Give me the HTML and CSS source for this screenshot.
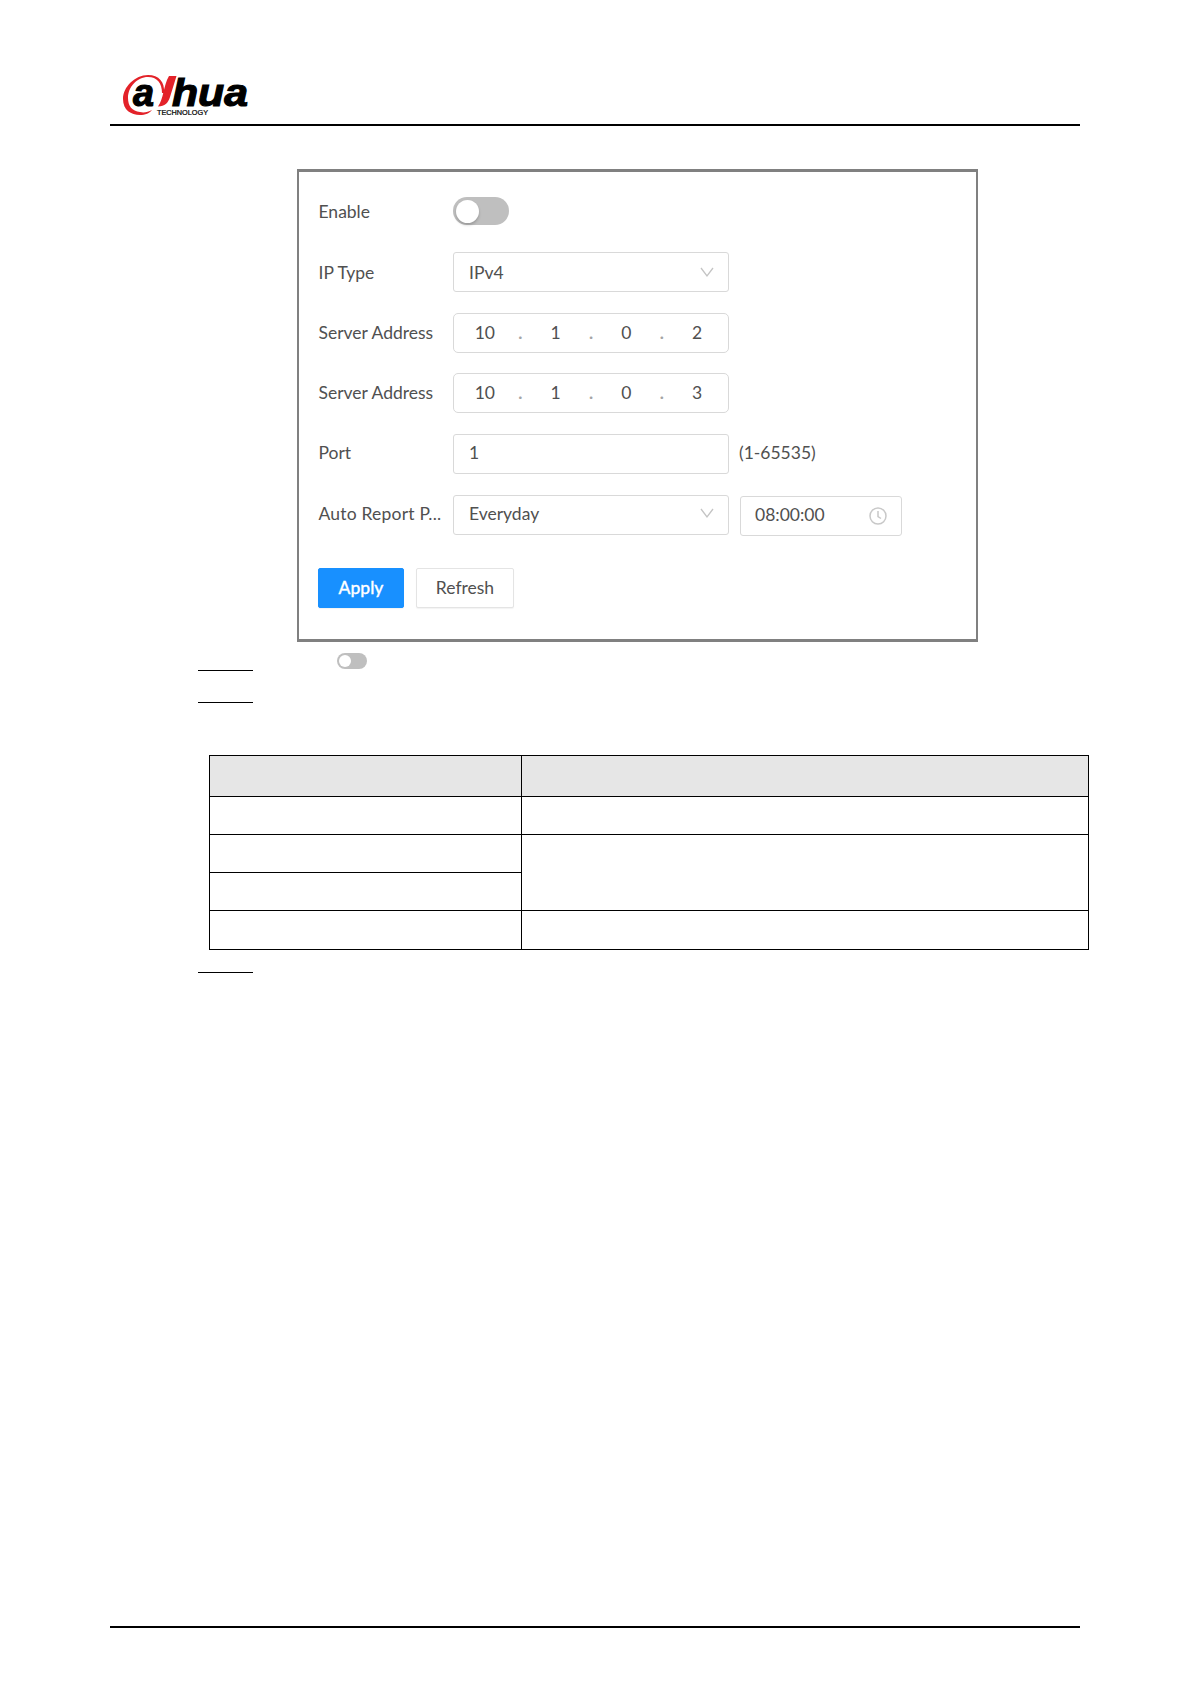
FILE: index.html
```
<!DOCTYPE html>
<html lang="en">
<head>
  <meta charset="UTF-8">
  <meta name="viewport" content="width=device-width, initial-scale=1.0">
  <title>Dahua Technology</title>
  <link rel="stylesheet" href="styles.css">
</head>
<body>
  <div class="page">
    <header class="page-header">
      <svg class="logo" width="130" height="44" viewBox="0 0 130 44">
        <path class="logo-red" d="M41 19C42 8 36 1 25 1C12 1 0 13 0 25C0 36 8 41 17 41C22 41 27 39 29 36C25 38 21 39 17 38C9 37 5 32 5 24C5 13 14 3 25 3C34 3 39 9 39 19Z"/>
        <path class="logo-red" d="M46 2H53.500L47 23C45 29 42 32.500 35 32.500C38 28 39 24 40.500 18C42 12 43 7 46 2Z"/>
        <text class="logo-text" x="10" y="32" textLength="21" lengthAdjust="spacingAndGlyphs">a</text>
        <text class="logo-text" x="49" y="32" textLength="76" lengthAdjust="spacingAndGlyphs">hua</text>
        <text class="logo-sub" x="34" y="41" textLength="51" lengthAdjust="spacingAndGlyphs">TECHNOLOGY</text>
      </svg>
    </header>

    <main>
      <div class="figure">
        <div class="row">
          <span class="label">Enable</span>
          <span class="switch"></span>
        </div>
        <div class="row">
          <span class="label">IP Type</span>
          <div class="field select">
            <span>IPv4</span>
            <svg class="arrow" width="14" height="11" viewBox="0 0 14 11"><path d="M1 1L7 9L13 1"/></svg>
          </div>
        </div>
        <div class="row">
          <span class="label">Server Address</span>
          <div class="field ip">
            <span>10</span><i>.</i><span>1</span><i>.</i><span>0</span><i>.</i><span>2</span>
          </div>
        </div>
        <div class="row">
          <span class="label">Server Address</span>
          <div class="field ip">
            <span>10</span><i>.</i><span>1</span><i>.</i><span>0</span><i>.</i><span>3</span>
          </div>
        </div>
        <div class="row row-port">
          <span class="label">Port</span>
          <div class="field">1</div>
          <span class="hint">(1-65535)</span>
        </div>
        <div class="row row-report">
          <span class="label">Auto Report P...</span>
          <div class="field select">
            <span>Everyday</span>
            <svg class="arrow" width="14" height="11" viewBox="0 0 14 11"><path d="M1 1L7 9L13 1"/></svg>
          </div>
          <div class="field time">
            <span>08:00:00</span>
            <svg class="clock" width="18" height="18" viewBox="0 0 18 18"><circle cx="9" cy="9" r="8"/><path d="M9 4V9.5L12 11.5"/></svg>
          </div>
        </div>
        <div class="buttons">
          <button class="btn btn-primary">Apply</button>
          <button class="btn">Refresh</button>
        </div>
      </div>

      <div class="steps">
        <div class="step">
          <span class="step-line"></span>
          <span class="switch switch-small"></span>
        </div>
        <div class="step">
          <span class="step-line"></span>
        </div>
      </div>

      <table class="params">
        <tr class="head"><th></th><th></th></tr>
        <tr><td></td><td></td></tr>
        <tr><td></td><td rowspan="2"></td></tr>
        <tr><td></td></tr>
        <tr class="last"><td></td><td></td></tr>
      </table>

      <div class="step step-last">
        <span class="step-line"></span>
      </div>
    </main>

    <footer class="page-footer"></footer>
  </div>
</body>
</html>
```

FILE: styles.css
```
* {
  box-sizing: border-box;
  margin: 0;
  padding: 0;
}

body {
  background-color: #fff;
  color: #505050;
  font-family: Lato, "Liberation Sans", sans-serif;
  font-size: 17.5px;
}

.page {
  display: flex;
  flex-direction: column;
  width: 1191px;
  height: 1684px;
  padding: 74px 0 56px;
}

main {
  flex: 1;
}

.page-header {
  width: 970px;
  height: 52px;
  margin-left: 110px;
  padding-left: 13px;
  border-bottom: 2px solid #000;
}

.page-footer {
  width: 970px;
  margin-left: 110px;
  border-top: 2px solid #000;
}

.logo {
  display: block;
  overflow: visible;
}

.logo-red {
  fill: #e32229;
}

.logo-text {
  font-family: "Liberation Sans", sans-serif;
  font-size: 39px;
  font-weight: 700;
  font-style: italic;
  fill: #000;
  stroke: #000;
  stroke-width: 1.2;
}

.logo-sub {
  font-family: "Liberation Sans", sans-serif;
  font-size: 6.5px;
  font-weight: 400;
  fill: #000;
  stroke: #000;
  stroke-width: 0.2;
}

.figure {
  width: 681px;
  height: 473px;
  margin: 43px 0 0 297px;
  padding: 9px 0 0 19px;
  border: 2px solid #808080;
  border-top-width: 3px;
  border-bottom-width: 3px;
}

.row {
  display: flex;
  align-items: center;
  height: 60px;
}

.row:first-child {
  height: 60px;
}

.row:nth-child(2) {
  height: 62px;
}

.row:first-child .label {
  padding-top: 3px;
}

.row-port,
.row-report {
  height: 61px;
}

.label {
  width: 135px;
  padding-left: 0.5px;
  padding-bottom: 2px;
  white-space: nowrap;
}

.field {
  display: flex;
  align-items: center;
  width: 276px;
  height: 40px;
  padding: 0 14px 2px 15px;
  border: 1px solid #d9d9d9;
  border-radius: 3px;
}

.row:nth-child(2) .label,
.row:nth-child(2) .field {
  padding-bottom: 0;
}

.row-report .label {
  padding-bottom: 3px;
  letter-spacing: 0.2px;
}

.select,
.time {
  justify-content: space-between;
}

.arrow {
  fill: none;
  stroke: #c4c4c4;
  stroke-width: 1.3;
}

.ip {
  padding: 0 0 2px;
  border-radius: 5px;
}

.ip span {
  flex: 1;
  text-align: center;
}

.ip i {
  width: 9px;
  color: #a5a5a5;
  font-style: normal;
  font-weight: 700;
  text-align: center;
}

.hint {
  margin-left: 10px;
  padding-bottom: 2px;
}

.time {
  width: 162px;
  margin: 2px 0 0 11px;
  padding: 0 14px 2px;
}

.clock {
  margin-top: 2px;
  fill: none;
  stroke: #c8c8c8;
  stroke-width: 1.5;
}

.switch {
  width: 56px;
  height: 28px;
  padding: 3px;
  border-radius: 14px;
  background-color: #bfbfbf;
}

.switch::before {
  content: "";
  display: block;
  width: 23px;
  height: 23px;
  border-radius: 50%;
  background-color: #fff;
  box-shadow: 0 2px 3px rgba(0, 0, 0, 0.2);
}

.buttons {
  display: flex;
  gap: 12px;
  margin-top: 23px;
}

.btn {
  width: 98px;
  height: 40px;
  padding-bottom: 2px;
  border: 1px solid #e4e4e4;
  border-radius: 2px;
  background-color: #fff;
  box-shadow: 0 1px 1px rgba(0, 0, 0, 0.05);
  color: #505050;
  font: inherit;
}

.btn-primary {
  width: 86px;
  border-color: #1890ff;
  background-color: #1890ff;
  color: #fff;
  font-weight: 500;
  -webkit-text-stroke: 0.3px #fff;
}

.step {
  display: flex;
  align-items: flex-end;
  height: 32px;
  padding-left: 198px;
}

.steps .step:first-child {
  height: 29px;
}

.step-line {
  width: 55px;
  height: 1px;
  background-color: #000;
}

.switch-small {
  width: 30px;
  height: 16px;
  margin: 0 0 2px 84px;
  padding: 2px;
}

.switch-small::before {
  width: 12px;
  height: 12px;
  box-shadow: none;
}

.params {
  width: 880px;
  margin: 52px 0 0 209px;
  border-collapse: collapse;
  table-layout: fixed;
}

.params th,
.params td {
  height: 38px;
  border: 1px solid #000;
}

.params th {
  height: 41px;
  background-color: #e6e6e6;
}

.params th:first-child {
  width: 312px;
}

.params .last td {
  height: 39px;
}

.step-last {
  height: 23px;
}
```
